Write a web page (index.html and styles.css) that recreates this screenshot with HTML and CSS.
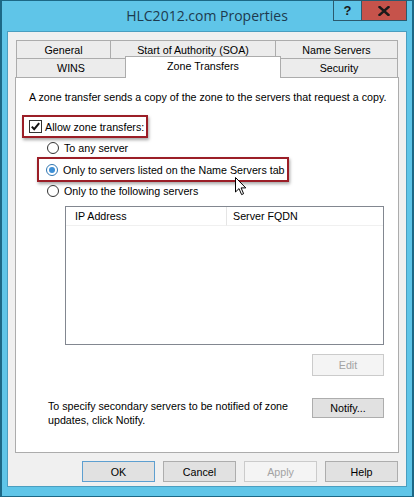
FILE: index.html
```html
<!DOCTYPE html>
<html>
<head>
<meta charset="utf-8">
<link rel="stylesheet" href="styles.css">
</head>
<body>
<div class="window">
  <div class="titlebar">
    <div></div>
    <div class="title">HLC2012.com Properties</div>
    <div class="ctrls">
      <div class="cbtn help">?</div>
      <div class="cbtn close">
        <svg width="12" height="10" viewBox="0 0 12 10"><path d="M1.5 1 L10.5 9 M10.5 1 L1.5 9" stroke="#1a1a1a" stroke-width="2.4" stroke-linecap="square"/></svg>
      </div>
    </div>
  </div>
  <div class="client">
    <div class="tabs">
      <div class="tabrow row1">
        <div class="tab t-general">General</div>
        <div class="tab t-soa">Start of Authority (SOA)</div>
        <div class="tab t-ns">Name Servers</div>
      </div>
      <div class="tabrow row2">
        <div class="tab t-wins">WINS</div>
        <div class="tab t-zone active">Zone Transfers</div>
        <div class="tab t-sec">Security</div>
      </div>
    </div>
    <div class="panel">
      <div class="intro">A zone transfer sends a copy of the zone to the servers that request a copy.</div>
      <div class="hl hl-check">
        <span class="checkbox">
          <svg width="13" height="13" viewBox="0 0 13 13"><rect x="0.5" y="0.5" width="12" height="12" fill="#fff" stroke="#333"/><path d="M2.8 6.6 L5.2 9.2 L10.2 3.2" fill="none" stroke="#111" stroke-width="2"/></svg>
        </span>
        <span>Allow zone transfers:</span>
      </div>
      <div class="radio r1">
        <svg class="rb" width="12" height="12" viewBox="0 0 12 12"><circle cx="6" cy="6" r="5.5" fill="#fff" stroke="#333"/></svg>
        <span>To any server</span>
      </div>
      <div class="hl hl-radio">
        <div class="radio">
          <svg class="rb" width="12" height="12" viewBox="0 0 12 12"><circle cx="6" cy="6" r="5.5" fill="#fff" stroke="#2f75b0"/><circle cx="6" cy="6" r="3" fill="#3d8fd6"/></svg>
          <span>Only to servers listed on the Name Servers tab</span>
        </div>
      </div>
      <div class="radio r3">
        <svg class="rb" width="12" height="12" viewBox="0 0 12 12"><circle cx="6" cy="6" r="5.5" fill="#fff" stroke="#333"/></svg>
        <span>Only to the following servers</span>
      </div>
      <div class="listwrap">
        <div class="list">
          <div class="lhead">
            <div class="col c1">IP Address</div>
            <div class="col c2">Server FQDN</div>
          </div>
        </div>
        <div class="btn disabled edit">Edit</div>
      </div>
      <div class="notify">
        <div class="ntext">To specify secondary servers to be notified of zone<br>updates, click Notify.</div>
        <div class="btn">Notify...</div>
      </div>
    </div>
    <div class="buttons">
      <div class="btn dlg default">OK</div>
      <div class="btn dlg">Cancel</div>
      <div class="btn dlg disabled">Apply</div>
      <div class="btn dlg">Help</div>
    </div>
  </div>
  <svg class="cursor" width="12" height="19" viewBox="0 0 12 19"><path d="M0.5 0.5 L0.5 15 L4 11.6 L6.6 17.6 L8.6 16.7 L6.1 10.9 L10.8 10.9 Z" fill="#fff" stroke="#000" stroke-width="1" stroke-linejoin="round"/></svg>
</div>
</body>
</html>
```
FILE: styles.css
```css
* { box-sizing: border-box; }
html, body { margin: 0; padding: 0; }
body {
  width: 414px;
  height: 497px;
  overflow: hidden;
  font-family: "Liberation Sans", Arial, sans-serif;
  font-size: 10.7px;
  color: #000;
}
.window {
  position: relative;
  width: 414px;
  height: 497px;
  background: #5fc5e8;
  border: 1px solid #1c6886;
  border-left-width: 2px;
  border-right-width: 2px;
  padding: 0 5px 9px 5px;
  display: flex;
  flex-direction: column;
  white-space: nowrap;
}
.titlebar {
  height: 30px;
  display: grid;
  grid-template-columns: 1fr auto 1fr;
  align-items: start;
}
.title {
  font-family: "Open Sans", "Noto Sans", sans-serif;
  font-size: 14px;
  color: #1d3a4e;
  line-height: 30px;
  padding-left: 0;
}
.ctrls {
  display: flex;
  justify-content: flex-end;
  margin-top: -1px;
}
.cbtn {
  height: 21px;
  display: flex;
  align-items: center;
  justify-content: center;
  border: 1px solid #2b5a6e;
}
.help {
  width: 28px;
  background: #5fc5e8;
  font-family: "Liberation Sans", Arial, sans-serif;
  font-weight: bold;
  font-size: 13px;
  color: #1a1a1a;
  border-right: none;
}
.close {
  width: 46px;
  background: #c6534b;
}
.client {
  flex: 1;
  background: #f0f0f0;
  border: 1px solid #4a9ec0;
  padding: 8px 7px 0 7px;
  display: flex;
  flex-direction: column;
}
.tabs {
  display: flex;
  flex-direction: column;
  padding: 0 1px;
}
.tabrow {
  display: flex;
  height: 18px;
}
.tab {
  background: #ececec;
  border: 1px solid #acacac;
  border-right: none;
  display: flex;
  align-items: center;
  justify-content: center;
  height: 18px;
}
.tab:last-child { border-right: 1px solid #acacac; }
.row1 .tab { border-bottom: none; }
.row2 { height: 19px; }
.row2 .tab { height: 19px; border-bottom: none; }
.t-general { width: 94px; }
.t-soa { width: 165px; }
.t-ns { width: 123px; }
.t-wins { width: 109px; }
.t-zone { width: 156px; }
.t-sec { width: 117px; }
.tab.active {
  background: #fff;
  height: 22px;
  margin-top: -2px;
  position: relative;
  z-index: 2;
  border-right: 1px solid #acacac;
  align-items: flex-start;
  padding-top: 3px;
  margin-bottom: -1px;
}
.tab.active + .tab { border-left: none; }
.panel {
  height: 376px;
  background: #fff;
  border: 1px solid #acacac;
  display: flex;
  flex-direction: column;
  align-items: flex-start;
}
.intro {
  margin: 12px 0 0 13px;
  line-height: 15px;
}
.hl {
  border: 2px solid #9b1e27;
  box-shadow: 1px 2px 3px rgba(0,0,0,0.35);
  background: #fff;
}
.hl-check {
  margin: 10px 0 0 6px;
  width: 126px;
  height: 23px;
  display: flex;
  align-items: center;
  gap: 3px;
  padding-left: 5px;
}
.checkbox { display: flex; }
.radio {
  display: flex;
  align-items: center;
  gap: 5px;
  height: 19px;
}
.rb { flex: none; }
.r1 { margin-left: 31px; }
.hl-radio {
  margin-left: 21px;
  width: 252px;
  height: 25px;
  display: flex;
  align-items: center;
  padding-left: 7px;
}
.r3 { margin-left: 31px; height: 18px; }
.listwrap {
  margin: 6px 0 0 49px;
  width: 319px;
  display: flex;
  flex-direction: column;
  align-items: flex-end;
}
.list {
  width: 319px;
  height: 139px;
  border: 1px solid #828790;
  background: #fff;
}
.lhead {
  display: flex;
  height: 19px;
  background: #fff;
}
.col {
  display: flex;
  align-items: center;
  padding-left: 9px;
  border-right: 1px solid #e5e5e5;
  border-bottom: 1px solid #f0f0f0;
}
.c1 { width: 161px; }
.c2 { flex: 1; padding-left: 6px; border-right: none; }
.btn {
  width: 72px;
  height: 21px;
  background: #e1e1e1;
  border: 1px solid #adadad;
  display: flex;
  align-items: center;
  justify-content: center;
}
.btn.disabled {
  background: #f4f4f4;
  border-color: #cbcbcb;
  color: #a3a3a3;
}
.edit { margin-top: 9px; height: 22px; }
.notify {
  margin: 22px 0 0 32px;
  width: 336px;
  display: flex;
  justify-content: space-between;
  align-items: flex-start;
}
.ntext { line-height: 14px; margin-top: 1px; }
.notify .btn { height: 20px; }
.buttons {
  display: flex;
  justify-content: flex-end;
  gap: 8px;
  margin-top: 8px;
  padding-right: 1px;
}
.btn.dlg { width: 73px; }
.btn.default { border-color: #5d9fd0; }
.cursor {
  position: absolute;
  left: 233px;
  top: 176px;
}
```
